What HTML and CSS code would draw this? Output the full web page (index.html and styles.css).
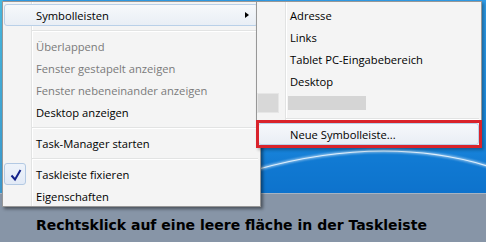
FILE: index.html
```html
<!DOCTYPE html>
<html>
<head>
<meta charset="utf-8">
<link rel="stylesheet" href="styles.css">
</head>
<body>
<div class="screen">
  <div class="desktop">
    <svg class="wallpaper" width="486" height="193" viewBox="0 0 486 193">
      <defs>
        <linearGradient id="sky" x1="0" y1="0" x2="0" y2="1">
          <stop offset="0" stop-color="#2f9be6"/>
          <stop offset="0.7" stop-color="#1a8ae0"/>
          <stop offset="1" stop-color="#0d6cc6"/>
        </linearGradient>
        <linearGradient id="edge" x1="0" y1="0" x2="0" y2="1">
          <stop offset="0" stop-color="#48b8de"/>
          <stop offset="1" stop-color="#3c98cc"/>
        </linearGradient>
        <filter id="glow" x="-10%" y="-50%" width="120%" height="200%">
          <feGaussianBlur stdDeviation="1.2"/>
        </filter>
      </defs>
      <rect width="486" height="193" fill="url(#sky)"/>
      <rect width="3" height="193" fill="url(#edge)"/>
      <path d="M250 172 Q 390 132 500 170 L 500 200 L 250 200 Z" fill="#0f78d2" opacity="0.55"/>
      <path d="M255 170 Q 390 132 500 170" fill="none" stroke="#ffffff" stroke-width="3" opacity="0.5" filter="url(#glow)"/>
      <path d="M255 170 Q 390 132 500 170" fill="none" stroke="#eaf6ff" stroke-width="1.2" opacity="0.9"/>
    </svg>
  </div>
  <div class="taskbar">
    <span class="caption">Rechtsklick auf eine leere fläche in der Taskleiste</span>
  </div>

  <div class="menu main-menu">
    <div class="item active"><span class="gutter"></span><span class="label">Symbolleisten</span><span class="arrow"></span></div>
    <div class="sep"></div>
    <div class="item disabled"><span class="gutter"></span><span class="label">Überlappend</span></div>
    <div class="item disabled"><span class="gutter"></span><span class="label">Fenster gestapelt anzeigen</span></div>
    <div class="item disabled"><span class="gutter"></span><span class="label">Fenster nebeneinander anzeigen</span></div>
    <div class="item"><span class="gutter"></span><span class="label">Desktop anzeigen</span></div>
    <div class="sep"></div>
    <div class="item"><span class="gutter"></span><span class="label">Task-Manager starten</span></div>
    <div class="sep"></div>
    <div class="item"><span class="gutter check"><svg width="22" height="22" viewBox="0 0 22 22"><path d="M7.5 12.5 L11 16.5 L16.5 7" fill="none" stroke="#14238a" stroke-width="2" stroke-linejoin="miter"/></svg></span><span class="label">Taskleiste fixieren</span></div>
    <div class="item"><span class="gutter"></span><span class="label">Eigenschaften</span></div>
  </div>

  <div class="menu sub-menu">
    <div class="item"><span class="gutter"></span><span class="label">Adresse</span></div>
    <div class="item"><span class="gutter"></span><span class="label">Links</span></div>
    <div class="item"><span class="gutter"></span><span class="label">Tablet PC-Eingabebereich</span></div>
    <div class="item"><span class="gutter"></span><span class="label">Desktop</span></div>
    <div class="item"><span class="gutter blurred-icon"></span><span class="blurred-text"></span></div>
    <div class="sep"></div>
    <div class="item active"><span class="gutter"></span><span class="label">Neue Symbolleiste...</span></div>
  </div>

  <div class="annotation"></div>
</div>
</body>
</html>
```

FILE: styles.css
```css
* { box-sizing: border-box; }

html, body {
  margin: 0;
  padding: 0;
  background: #1a8ae0;
}

.screen {
  position: relative;
  width: 486px;
  height: 242px;
  overflow: hidden;
  display: flex;
  flex-direction: column;
}

.desktop {
  height: 193px;
  flex: none;
}

.wallpaper {
  display: block;
}

.taskbar {
  flex: 1;
  background: #8795a7;
  border-top: 1px solid #a7b3c1;
  padding: 22px 0 0 36px;
}

.caption {
  display: block;
  font-family: "DejaVu Sans", sans-serif;
  font-weight: bold;
  font-size: 14px;
  line-height: 18px;
  color: #000;
  white-space: nowrap;
}

.menu {
  position: absolute;
  background-color: #f4f4f4;
  background-image: linear-gradient(to right, transparent 28px, #e2e3e3 28px, #e2e3e3 29px, #ffffff 29px, #ffffff 30px, transparent 30px);
  border: 1px solid #979797;
  padding: 2px 2px 2px 1px;
  font-family: "Open Sans", "Noto Sans", sans-serif;
  font-size: 11.2px;
  color: #000;
  box-shadow: 2px 2px 3px rgba(0, 0, 0, 0.45);
}

.main-menu {
  left: 2px;
  top: 1px;
  width: 259px;
  height: 206px;
}

.sub-menu {
  left: 256px;
  top: 1px;
  width: 226px;
  height: 147px;
  box-shadow: 2px 2px 3px rgba(0, 0, 0, 0.3);
}

.item {
  display: flex;
  align-items: center;
  height: 22px;
  border: 1px solid transparent;
  border-radius: 3px;
  white-space: nowrap;
}

.item.active {
  border-color: #b9d0e8;
  background: linear-gradient(#f6f8fb, #e9eef5);
}

.item.disabled {
  color: #7a7a7a;
}

.gutter {
  flex: none;
  width: 22px;
  height: 22px;
  margin-left: -1px;
  margin-right: 10px;
  display: flex;
  align-items: center;
  justify-content: center;
}

.gutter.check {
  border: 1px solid #b3c9e3;
  border-radius: 3px;
  background: linear-gradient(#eef3fa, #e2eaf6);
}

.gutter.check svg {
  display: block;
  flex: none;
}

.gutter.blurred-icon {
  background: #d8d8d8;
  border: 1px solid #e6e6e6;
  margin-left: -2px;
  margin-right: 10px;
  width: 22px;
  height: 20px;
  filter: blur(0.4px);
}

.blurred-text {
  display: block;
  width: 78px;
  height: 14px;
  background: #d5d5d5;
  margin-left: -1px;
  filter: blur(0.5px);
}

.label {
  line-height: 20px;
  padding-top: 1px;
}

.arrow {
  margin-left: auto;
  margin-right: 8px;
  width: 0;
  height: 0;
  border-left: 4px solid #000;
  border-top: 3.5px solid transparent;
  border-bottom: 3.5px solid transparent;
}

.sep {
  height: 9px;
  margin-left: 28px;
  background: linear-gradient(to bottom, transparent 4px, #e2e3e3 4px, #e2e3e3 5px, #ffffff 5px, #ffffff 6px, transparent 6px);
}

.annotation {
  position: absolute;
  left: 256px;
  top: 120px;
  width: 226px;
  height: 28px;
  border: 3px solid #d9232b;
}
```
